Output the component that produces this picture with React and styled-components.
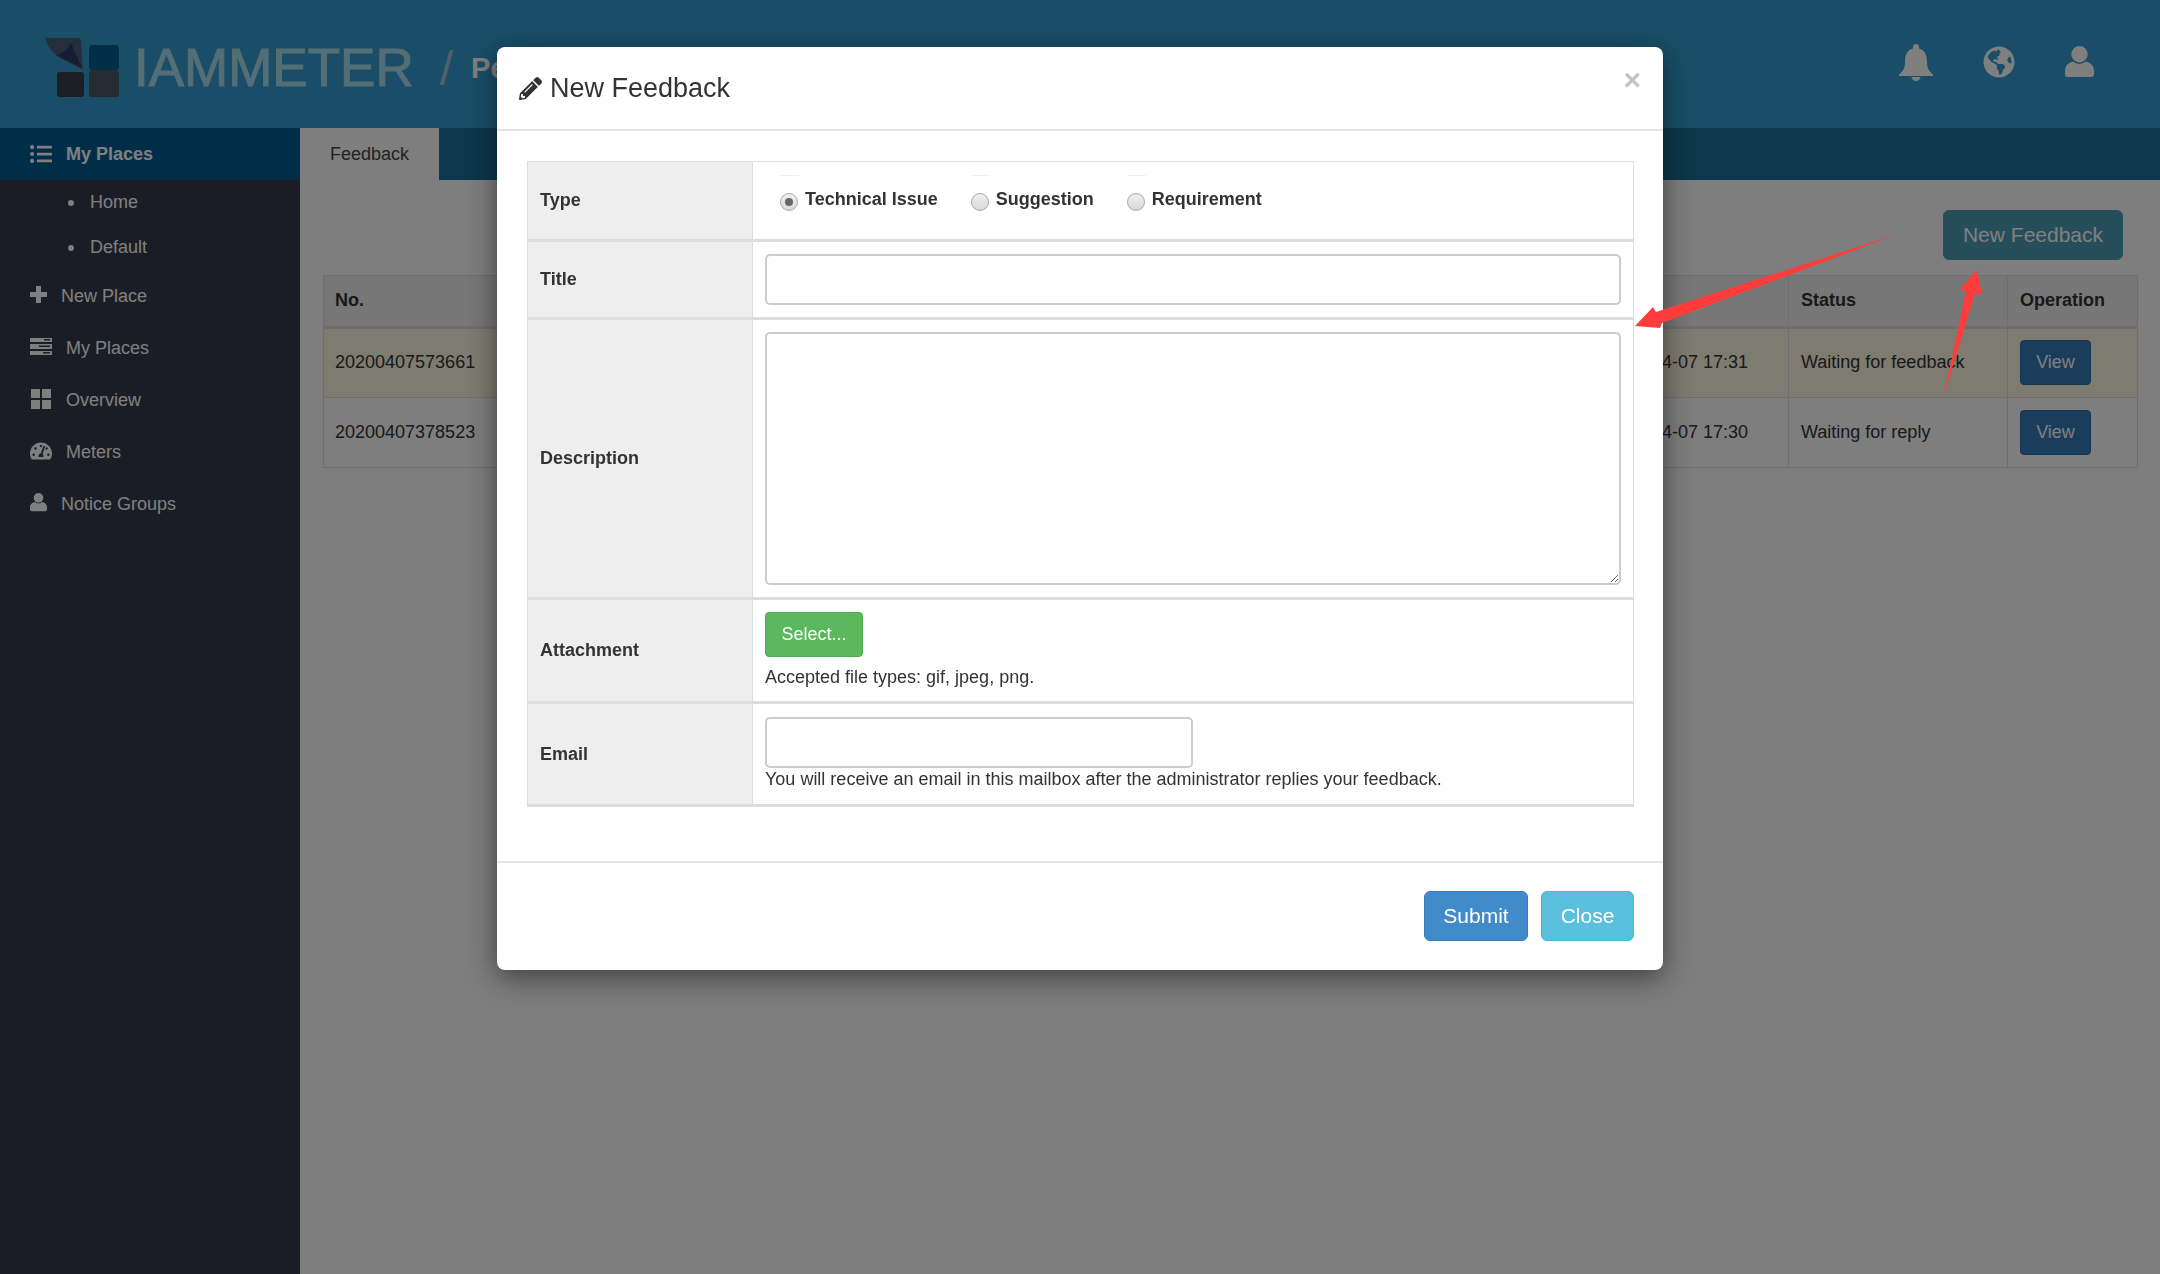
import React from "react";
import styled, { createGlobalStyle } from "styled-components";
import { FaListUl, FaTachometerAlt, FaGlobeAmericas, FaPencilAlt } from "react-icons/fa";

const GlobalStyle = createGlobalStyle`
  html, body {
    margin: 0;
    padding: 0;
    background: #fff;
  }
  body {
    font-family: "Liberation Sans", Arial, sans-serif;
    font-size: 18px;
    color: #333;
  }
  * {
    box-sizing: border-box;
  }
`;

const UserIcon = ({ size = 30 }) => (
  <svg width={size} height={size * 1.07} viewBox="0 0 30 32" fill="currentColor">
    <circle cx="15" cy="8.5" r="8.5" />
    <path d="M3 32 Q0 32 0 29 V25 Q0 18.5 8 16 Q15 21 22 16 Q30 18.5 30 25 V29 Q30 32 27 32 Z" />
  </svg>
);

const BellIcon = () => (
  <svg width="34" height="37" viewBox="0 0 34 37" fill="currentColor">
    <path d="M17 0 a3 3 0 0 1 3 3 v1.500 c6 1.500 8 7 8 13 c0 7 2 9.500 6 13 v1.500 H0 v-1.500 c4 -3.500 6 -6 6 -13 c0 -6 2 -11.500 8 -13 V3 a3 3 0 0 1 3 -3z" />
    <path d="M12.500 33 h9 a4.500 4 0 0 1 -9 0z" />
  </svg>
);

const PlusIcon = () => (
  <svg width="17" height="17" viewBox="0 0 17 17" fill="currentColor">
    <path d="M6 0 H11 V6 H17 V11 H11 V17 H6 V11 H0 V6 H6Z" />
  </svg>
);

const TasksIcon = () => (
  <svg width="22" height="17" viewBox="0 0 22 17" fill="currentColor">
    <path
      fillRule="evenodd"
      d="M0 0 H22 V4 H0Z M14 1 V2.500 H20 V1Z M0 6 H22 V11 H0Z M9 7.500 V9 H20 V7.500Z M0 13 H22 V17 H0Z M13 14 V15.500 H20 V14Z"
    />
  </svg>
);

const GridIcon = () => (
  <svg width="20" height="20" viewBox="0 0 20 20" fill="currentColor">
    <rect x="0" y="0" width="9" height="9" />
    <rect x="11" y="0" width="9" height="9" />
    <rect x="0" y="11" width="9" height="9" />
    <rect x="11" y="11" width="9" height="9" />
  </svg>
);

const LogoMark = () => (
  <svg width="75" height="60" viewBox="45 39 75 60">
    <path d="M45 39 H78 Q81 39 81 43 L83 71 L62 60 Q50 55 45 39Z" fill="#4a5f78" />
    <path d="M71 44 L82 69 L56 56 Q66 54 71 44Z" fill="#2e3868" />
    <rect x="89" y="46" width="30" height="25" rx="3" fill="#005c92" />
    <rect x="57" y="73" width="27" height="25" rx="3" fill="#363f46" />
    <rect x="89" y="71" width="30" height="27" rx="3" fill="#4a5666" />
  </svg>
);

const sideItems = [
  { label: "New Place", icon: <PlusIcon />, wide: false },
  { label: "My Places", icon: <TasksIcon />, wide: true },
  { label: "Overview", icon: <GridIcon />, wide: true },
  { label: "Meters", icon: <FaTachometerAlt size={22} />, wide: true },
  { label: "Notice Groups", icon: <UserIcon size={17} />, wide: false },
];

const rows = [
  { no: "20200407573661", time: "2020-04-07 17:31", status: "Waiting for feedback", warn: true },
  { no: "20200407378523", time: "2020-04-07 17:30", status: "Waiting for reply", warn: false },
];

const App = () => {
  return (
    <Page>
      <GlobalStyle />
      <Header>
        <Brand>
          <LogoMark />
          <BrandName>IAMMETER</BrandName>
          <BrandSlash>/</BrandSlash>
          <BrandPage>Personal</BrandPage>
        </Brand>
        <HeaderIcons>
          <BellIcon />
          <FaGlobeAmericas size={32} />
          <UserIcon size={29} />
        </HeaderIcons>
      </Header>
      <Body>
        <Sidebar>
          <SideHead>
            <FaListUl size={22} />
            My Places
          </SideHead>
          <SubItem>Home</SubItem>
          <SubItem>Default</SubItem>
          {sideItems.map((item) => (
            <SideItem key={item.label} $wide={item.wide}>
              {item.icon}
              {item.label}
            </SideItem>
          ))}
        </Sidebar>
        <Main>
          <TabBar>
            <Tab>Feedback</Tab>
          </TabBar>
          <Toolbar>
            <NewButton>New Feedback</NewButton>
          </Toolbar>
          <ListTable>
            <colgroup>
              <col />
              <col width="194" />
              <col width="219" />
              <col width="130" />
            </colgroup>
            <thead>
              <tr>
                <Th>No.</Th>
                <Th>Time</Th>
                <Th>Status</Th>
                <Th>Operation</Th>
              </tr>
            </thead>
            <tbody>
              {rows.map((r) => (
                <Tr key={r.no} $warn={r.warn}>
                  <Td>{r.no}</Td>
                  <Td>{r.time}</Td>
                  <Td>{r.status}</Td>
                  <Td>
                    <ViewButton>View</ViewButton>
                  </Td>
                </Tr>
              ))}
            </tbody>
          </ListTable>
        </Main>
      </Body>
      <Backdrop>
        <Modal>
          <ModalHeader>
            <FaPencilAlt size={23} />
            <ModalTitle>New Feedback</ModalTitle>
            <CloseX>×</CloseX>
          </ModalHeader>
          <ModalBody>
            <FormTable>
              <tbody>
                <FormRow $h={79}>
                  <Label>Type</Label>
                  <Field>
                    <RadioRow>
                      <RadioLabel>
                        <RadioBox>
                          <Radio $checked />
                        </RadioBox>
                        Technical Issue
                      </RadioLabel>
                      <RadioLabel>
                        <RadioBox>
                          <Radio />
                        </RadioBox>
                        Suggestion
                      </RadioLabel>
                      <RadioLabel>
                        <RadioBox>
                          <Radio />
                        </RadioBox>
                        Requirement
                      </RadioLabel>
                    </RadioRow>
                  </Field>
                </FormRow>
                <FormRow $h={78}>
                  <Label>Title</Label>
                  <Field $flush>
                    <TextInput type="text" />
                  </Field>
                </FormRow>
                <FormRow $h={280}>
                  <Label>Description</Label>
                  <Field $flush>
                    <TextArea />
                  </Field>
                </FormRow>
                <FormRow $h={104}>
                  <Label>Attachment</Label>
                  <Field>
                    <SelectButton>Select...</SelectButton>
                    <Help $top={10}>Accepted file types: gif, jpeg, png.</Help>
                  </Field>
                </FormRow>
                <FormRow $h={103}>
                  <Label>Email</Label>
                  <Field>
                    <EmailInput type="text" />
                    <Help $top={1}>You will receive an email in this mailbox after the administrator replies your feedback.</Help>
                  </Field>
                </FormRow>
              </tbody>
            </FormTable>
          </ModalBody>
          <ModalFooter>
            <FooterButton $w={104} $bg="#428bca" $line="#357ebd">Submit</FooterButton>
            <FooterButton $w={93} $bg="#5bc0de" $line="#46b8da">Close</FooterButton>
          </ModalFooter>
        </Modal>
      </Backdrop>
      <Arrows viewBox="0 0 2160 1274">
        <polygon points="1895,235 1656,312 1653,307 1635,326 1660,328 1662,323" fill="#ff3b3b" />
        <polygon points="1944,396 1966,291 1960,289 1977,270 1982,295 1975,293" fill="#ff3b3b" />
      </Arrows>
    </Page>
  );
};

export default App;

const Page = styled.div`
  min-height: 100vh;
  display: flex;
  flex-direction: column;
`;

const Header = styled.header`
  height: 128px;
  flex: none;
  display: flex;
  align-items: center;
  justify-content: space-between;
  padding: 0 66px 0 45px;
  background: #349cd0;
`;

const Brand = styled.div`
  display: flex;
  align-items: center;
  padding-top: 8px;
`;

const BrandName = styled.span`
  margin-left: 14px;
  font-size: 53px;
  line-height: 60px;
  color: #a8dcec;
  -webkit-text-stroke: 1px #a8dcec;
`;

const BrandSlash = styled.span`
  margin-left: 26px;
  font-size: 48px;
  color: #a0c0d0;
`;

const BrandPage = styled.span`
  margin-left: 18px;
  font-size: 29px;
  font-weight: bold;
  color: #fff;
`;

const HeaderIcons = styled.div`
  display: flex;
  align-items: center;
  gap: 50px;
  padding-bottom: 4px;
  color: #fff;
`;

const Body = styled.div`
  flex: 1;
  display: flex;
`;

const Sidebar = styled.nav`
  width: 300px;
  flex: none;
  background: #343a4a;
  color: #fff;
`;

const SideHead = styled.div`
  height: 52px;
  display: flex;
  align-items: center;
  gap: 14px;
  padding-left: 30px;
  background: #005c92;
  font-weight: bold;
`;

const SubItem = styled.div`
  height: 45px;
  display: flex;
  align-items: center;
  padding-left: 90px;
  position: relative;

  &::before {
    content: "";
    position: absolute;
    left: 68px;
    top: 20px;
    width: 6px;
    height: 6px;
    border-radius: 50%;
    background: #fff;
  }
`;

const SideItem = styled.div`
  height: 52px;
  display: flex;
  align-items: center;
  gap: 14px;
  padding-left: 30px;

  svg {
    width: ${(p) => (p.$wide ? "22px" : "17px")};
    margin-top: -3px;
  }
`;

const Main = styled.main`
  flex: 1;
  min-width: 0;
  background: #fcfcfc;
`;

const TabBar = styled.div`
  height: 52px;
  background: #1a6f98;
`;

const Tab = styled.div`
  width: 139px;
  height: 52px;
  display: flex;
  align-items: center;
  justify-content: center;
  background: #fcfcfc;
  color: #444;
`;

const Toolbar = styled.div`
  display: flex;
  justify-content: flex-end;
  padding: 30px 37px 15px 0;
`;

const NewButton = styled.button`
  width: 180px;
  height: 50px;
  border: 1px solid #46a0b8;
  border-radius: 6px;
  background: #4a9db5;
  color: #fff;
  font-family: inherit;
  font-size: 21px;
`;

const ListTable = styled.table`
  width: 1815px;
  margin-left: 23px;
  border-collapse: collapse;
  table-layout: fixed;
  border: 1px solid #ddd;
`;

const Th = styled.th`
  height: 52px;
  padding: 0 11px 2px;
  background: #efefef;
  border: 1px solid #ddd;
  border-bottom-width: 3px;
  text-align: left;
  color: #333;

  &:nth-child(n + 3) {
    padding-left: 12px;
  }
`;

const Tr = styled.tr`
  background: ${(p) => (p.$warn ? "#fcf8e3" : "#fcfcfc")};
`;

const Td = styled.td`
  height: 70px;
  padding: 0 11px 1px;
  border: 1px solid #ddd;

  &:nth-child(n + 3) {
    padding-left: 12px;
  }
`;

const ViewButton = styled.button`
  display: block;
  width: 71px;
  height: 45px;
  border: 1px solid #2e6da4;
  border-radius: 4px;
  background: #337ab7;
  color: #fff;
  font-family: inherit;
  font-size: 18px;
`;

const Backdrop = styled.div`
  position: fixed;
  inset: 0;
  display: flex;
  justify-content: center;
  align-items: flex-start;
  padding-top: 47px;
  background: rgba(0, 0, 0, 0.5);
`;

const Modal = styled.div`
  width: 1166px;
  background: #fff;
  border-radius: 8px;
  box-shadow: 0 8px 30px rgba(0, 0, 0, 0.5);
`;

const ModalHeader = styled.div`
  height: 84px;
  display: flex;
  align-items: center;
  gap: 8px;
  padding: 0 22px;
  border-bottom: 2px solid #e5e5e5;
  color: #333;
`;

const ModalTitle = styled.h4`
  margin: 0;
  flex: 1;
  font-size: 27px;
  font-weight: normal;
`;

const CloseX = styled.span`
  margin-top: -16px;
  font-size: 30px;
  font-weight: bold;
  color: #c4c4c4;
`;

const ModalBody = styled.div`
  padding: 30px 29px 54px 30px;
`;

const FormTable = styled.table`
  width: 100%;
  border-collapse: collapse;
  border: 1px solid #ddd;
`;

const FormRow = styled.tr`
  height: ${(p) => p.$h}px;
  border-bottom: 3px solid #ddd;
`;

const Label = styled.td`
  width: 225px;
  padding: 0 12px;
  background: #eee;
  border-right: 1px solid #ddd;
  font-weight: bold;
`;

const Field = styled.td`
  padding: ${(p) => (p.$flush ? "0 12px" : "0 12px 2px")};
`;

const RadioRow = styled.div`
  display: flex;
  align-items: center;
  gap: 33px;
  padding-left: 15px;
`;

const RadioLabel = styled.label`
  display: flex;
  align-items: center;
  gap: 6px;
  font-weight: bold;
`;

const RadioBox = styled.span`
  width: 19px;
  height: 50px;
  display: flex;
  align-items: center;
  padding-top: 4px;
  border-top: 1px solid #f0f0f0;
`;

const Radio = styled.span`
  width: 18px;
  height: 18px;
  display: flex;
  align-items: center;
  justify-content: center;
  border: 1px solid #aaa;
  border-radius: 50%;
  background: linear-gradient(#f0f0f0, #d8d8d8);

  &::after {
    content: "";
    display: ${(p) => (p.$checked ? "block" : "none")};
    width: 8px;
    height: 8px;
    border-radius: 50%;
    background: #666;
  }
`;

const TextInput = styled.input`
  display: block;
  width: 100%;
  height: 51px;
  padding: 6px 12px;
  border: 2px solid #ccc;
  border-radius: 5px;
  background: #fff;
`;

const EmailInput = styled(TextInput)`
  width: 428px;
`;

const TextArea = styled.textarea`
  display: block;
  width: 100%;
  height: 253px;
  padding: 6px 12px;
  border: 2px solid #ccc;
  border-radius: 5px;
  background: #fff;
`;

const SelectButton = styled.button`
  display: block;
  width: 98px;
  height: 45px;
  border: 1px solid #4cae4c;
  border-radius: 4px;
  background: #5cb85c;
  color: #fff;
  font-family: inherit;
  font-size: 18px;
`;

const Help = styled.div`
  margin-top: ${(p) => p.$top}px;
  line-height: 20px;
`;

const ModalFooter = styled.div`
  display: flex;
  justify-content: flex-end;
  gap: 13px;
  padding: 28px 29px 29px;
  border-top: 2px solid #e5e5e5;
`;

const FooterButton = styled.button`
  width: ${(p) => p.$w}px;
  height: 50px;
  padding: 0;
  border: 1px solid ${(p) => p.$line};
  border-radius: 6px;
  background: ${(p) => p.$bg};
  color: #fff;
  font-family: inherit;
  font-size: 21px;
`;

const Arrows = styled.svg`
  position: fixed;
  top: 0;
  left: 0;
  width: 2160px;
  height: 1274px;
  pointer-events: none;
`;
